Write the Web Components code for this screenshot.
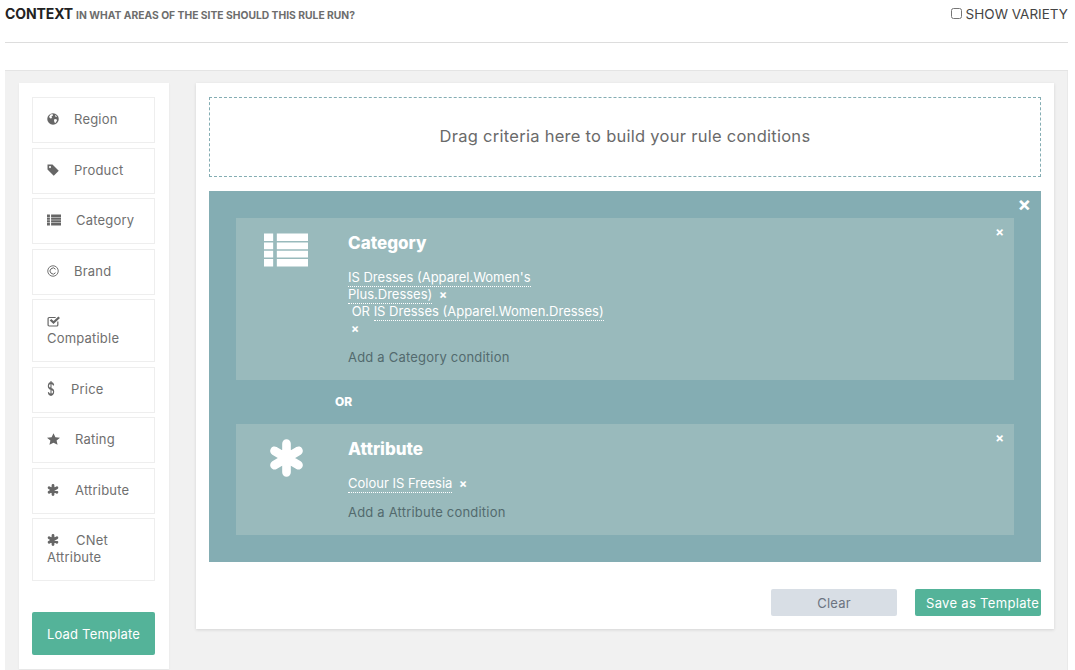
<!DOCTYPE html>
<html lang="en">
<head>
<meta charset="utf-8">
<title>Context</title>
<style>
    html, body { margin: 0; padding: 0; background: #fff; }
    body { font-family: Inter, "Open Sans", sans-serif; font-size: 13px; height: 670px; overflow: hidden; }
</style>
</head>
<body>
<rule-context></rule-context>

<script>
const ICONS = {
    globe: `<circle cx="12" cy="12" r="11.500"/><path fill="#fff" d="M7 3l4-1 1 3-3 2 1 3-3 1-3-3zM15 12l4 .5 1 2.500-3 5-2-1-1-4zM17 4l3 3-2 1-2-2z"/>`,
    tag: `<path fill-rule="evenodd" d="M1 1h10l12.500 12.500-10 10L1 11zM6 4a2 2 0 1 0 .01 0z"/>`,
    list: `<path d="M0 1h5v5H0zM7 1h17v5H7zM0 7h5v4.500H0zM7 7h17v4.500H7zM0 12.500h5V17H0zM7 12.500h17V17H7zM0 18h5v5H0zM7 18h17v5H7z"/>`,
    copyright: `<circle cx="12" cy="12" r="10.500" fill="none" stroke="currentColor" stroke-width="1.800"/><path fill="none" stroke="currentColor" stroke-width="2" d="M17 8.500a6 6 0 1 0 0 7"/>`,
    check: `<path fill="none" stroke="currentColor" stroke-width="2.200" d="M20 13v7a2 2 0 0 1-2 2H4a2 2 0 0 1-2-2V7a2 2 0 0 1 2-2h12"/><path d="M5 11l3-3 4 4 9-9 3 3-12 12z"/>`,
    dollar: `<path fill="none" stroke="currentColor" stroke-width="3.200" d="M20 7c-1-3-4-4-8-4-4 0-8 2-8 5 0 7 16 3 16 9 0 3-4 5-8 5-4 0-7-1-8-4M12 0v24"/>`,
    star: `<path d="M12 .500l3.500 7.800 8.500 1-6.300 5.700 1.800 8.500L12 19.300l-7.500 4.200 1.800-8.500L0 9.300l8.500-1z"/>`,
    asterisk: `<path fill="none" stroke="currentColor" stroke-width="5.600" stroke-linecap="round" d="M12 3v18M4.200 7.500l15.600 9M4.200 16.500l15.600-9"/>`
};

class RuleIcon extends HTMLElement {
    connectedCallback() {
        const name = this.getAttribute('name');
        const w = this.getAttribute('w') || 13;
        const h = this.getAttribute('h') || 13;
        this.attachShadow({ mode: 'open' });
        this.shadowRoot.innerHTML = `
            <style>
                :host { display: inline-block; line-height: 0; vertical-align: -1px; }
                svg { fill: currentColor; display: block; }
            </style>
            <svg width="${w}" height="${h}" viewBox="0 0 24 24" preserveAspectRatio="none">${ICONS[name]}</svg>
        `;
    }
}

class CriteriaItem extends HTMLElement {
    connectedCallback() {
        const icon = this.getAttribute('icon');
        const w = this.getAttribute('icon-w') || 12;
        const h = this.getAttribute('icon-h') || 12;
        const gap = this.getAttribute('gap') || 15;
        this.attachShadow({ mode: 'open' });
        this.shadowRoot.innerHTML = `
            <style>
                :host {
                    display: block;
                    box-sizing: border-box;
                    border: 1px solid #eee;
                    padding: 13px 14px 13.750px;
                    line-height: 17px;
                    color: #6f6f6f;
                    font-size: 13px;
                    letter-spacing: .2px;
                }
                rule-icon {
                    margin-right: ${gap}px;
                    margin-top: -3px;
                    vertical-align: ${h > 12 ? -2 : -1}px;
                    color: #666;
                }
            </style>
            <rule-icon name="${icon}" w="${w}" h="${h}"></rule-icon><slot></slot>
        `;
    }
}

class ActionButton extends HTMLElement {
    connectedCallback() {
        const grey = this.hasAttribute('grey');
        this.attachShadow({ mode: 'open' });
        this.shadowRoot.innerHTML = `
            <style>
                :host {
                    display: flex;
                    align-items: center;
                    justify-content: center;
                    box-sizing: border-box;
                    border-radius: 2px;
                    background: ${grey ? '#d8dee5' : '#54b399'};
                    color: ${grey ? '#6c7380' : '#fff'};
                    font-size: 13px;
                    white-space: nowrap;
                    letter-spacing: .2px;
                }
            </style>
            <slot></slot>
        `;
    }
}

class CriteriaSidebar extends HTMLElement {
    connectedCallback() {
        this.attachShadow({ mode: 'open' });
        this.shadowRoot.innerHTML = `
            <style>
                :host {
                    display: flex;
                    flex-direction: column;
                    box-sizing: border-box;
                    width: 150px;
                    height: 586px;
                    padding: 14.330px 14px 14px 13px;
                    background: #fff;
                    box-shadow: 0 1px 2px rgba(0, 0, 0, .06);
                }
                .items { display: flex; flex-direction: column; gap: 4.750px; }
                action-button { height: 43px; margin-top: auto; }
            </style>
            <div class="items">
                <criteria-item icon="globe">Region</criteria-item>
                <criteria-item icon="tag">Product</criteria-item>
                <criteria-item icon="list" icon-w="14" gap="15">Category</criteria-item>
                <criteria-item icon="copyright">Brand</criteria-item>
                <criteria-item icon="check" icon-w="13">Compatible</criteria-item>
                <criteria-item icon="dollar" icon-w="8" icon-h="15" gap="16">Price</criteria-item>
                <criteria-item icon="star" icon-w="13" gap="15">Rating</criteria-item>
                <criteria-item icon="asterisk" gap="16">Attribute</criteria-item>
                <criteria-item icon="asterisk" gap="17">CNet Attribute</criteria-item>
            </div>
            <action-button>Load Template</action-button>
        `;
    }
}

class ConditionCard extends HTMLElement {
    connectedCallback() {
        const title = this.getAttribute('title');
        const icon = this.getAttribute('icon');
        const w = this.getAttribute('icon-w');
        const h = this.getAttribute('icon-h');
        const top = this.getAttribute('icon-top');
        const left = this.getAttribute('icon-left');
        this.attachShadow({ mode: 'open' });
        this.shadowRoot.innerHTML = `
            <style>
                :host {
                    display: flex;
                    position: relative;
                    box-sizing: border-box;
                    background: #99babc;
                    color: #fff;
                    padding: 14px 0 14px 28px;
                }
                .pic { width: ${84 - left}px; flex: none; padding: ${top}px 0 0 ${left}px; }
                .close {
                    position: absolute;
                    top: 6px;
                    right: 10px;
                    font-weight: 700;
                    font-size: 13px;
                    line-height: 17px;
                }
                h3 { margin: 0 0 15px; font-size: 17px; line-height: 22px; font-weight: 800; }
                .body { width: 262px; line-height: 17px; font-size: 13px; }
                .add { margin-top: 12px; color: #536a6e; letter-spacing: .2px; white-space: nowrap; }
            </style>
            <div class="pic"><rule-icon name="${icon}" w="${w}" h="${h}"></rule-icon></div>
            <div>
                <h3>${title}</h3>
                <div class="body"><slot></slot></div>
                <div class="add">Add a ${title} condition</div>
            </div>
            <span class="close">×</span>
        `;
    }
}

class ConditionValue extends HTMLElement {
    connectedCallback() {
        this.attachShadow({ mode: 'open' });
        this.shadowRoot.innerHTML = `
            <style>
                :host { display: inline; }
                span { border-bottom: 1px dotted #fff; padding-bottom: 1px; }
                b { font-size: 12px; margin-left: 3px; }
            </style>
            <span><slot></slot></span> <b>×</b>
        `;
    }
}

class RuleBuilder extends HTMLElement {
    connectedCallback() {
        this.attachShadow({ mode: 'open' });
        this.shadowRoot.innerHTML = `
            <style>
                :host {
                    display: block;
                    box-sizing: border-box;
                    width: 858px;
                    height: 546px;
                    padding: 14px 13px 13px;
                    background: #fff;
                    box-shadow: 0 1px 3px rgba(0, 0, 0, .12);
                }
                .drop {
                    display: flex;
                    align-items: center;
                    justify-content: center;
                    box-sizing: border-box;
                    height: 80px;
                    padding-bottom: 2px;
                    border: 1px dashed #84adb3;
                    color: #6a6a6a;
                    font-size: 16.500px;
                    letter-spacing: .27px;
                }
                .group {
                    position: relative;
                    box-sizing: border-box;
                    height: 371px;
                    margin-top: 14px;
                    padding: 27px;
                    background: #84adb3;
                }
                .x {
                    position: absolute;
                    top: 3px;
                    right: 10px;
                    color: #fff;
                    font-size: 20px;
                    line-height: 20px;
                    font-weight: 700;
                }
                .or {
                    height: 44px;
                    line-height: 44px;
                    padding-left: 99px;
                    color: #fff;
                    font-size: 12px;
                    font-weight: 800;
                }
                .first { height: 162px; }
                .second { height: 111px; }
                .actions { display: flex; justify-content: flex-end; gap: 18px; margin-top: 27px; }
                action-button { width: 126px; height: 27px; }
                .save { justify-content: flex-start; padding-left: 11px; letter-spacing: .32px; }
            </style>
            <div class="drop">Drag criteria here to build your rule conditions</div>
            <div class="group">
                <span class="x">×</span>
                <condition-card class="first" title="Category" icon="list" icon-w="44" icon-h="36" icon-top="0" icon-left="0">
                    <condition-value>IS Dresses (Apparel.Women's Plus.Dresses)</condition-value><br>&nbsp;OR <condition-value>IS Dresses (Apparel.Women.Dresses)</condition-value>
                </condition-card>
                <div class="or">OR</div>
                <condition-card class="second" title="Attribute" icon="asterisk" icon-w="37" icon-h="38" icon-top="1" icon-left="4">
                    <condition-value>Colour IS Freesia</condition-value>
                </condition-card>
            </div>
            <div class="actions">
                <action-button grey>Clear</action-button>
                <action-button class="save">Save as Template</action-button>
            </div>
        `;
    }
}

class RuleContext extends HTMLElement {
    connectedCallback() {
        this.attachShadow({ mode: 'open' });
        this.shadowRoot.innerHTML = `
            <style>
                :host { display: block; padding: 0 7px 0 5px; }
                header {
                    display: flex;
                    justify-content: space-between;
                    align-items: center;
                    box-sizing: border-box;
                    height: 43px;
                    padding-bottom: 16px;
                    border-bottom: 1px solid #ddd;
                }
                .title { color: #222; font-weight: 700; font-size: 14px; letter-spacing: -.1px; }
                .sub { color: #6d6d6d; font-weight: 700; font-size: 10.300px; text-transform: uppercase; margin-left: 3px; }
                label { display: flex; align-items: center; gap: 4px; color: #444; font-size: 13.500px; margin-top: 1px; }
                input { margin: 0; width: 11px; height: 11px; }
                .panel {
                    display: flex;
                    gap: 27px;
                    box-sizing: border-box;
                    margin-top: 27px;
                    height: 600px;
                    padding: 12px 14px 0 14px;
                    background: #f1f1f1;
                    border-top: 1px solid #e4e4e4;
                    box-shadow: inset -1px 0 0 #e9e9e9;
                }
            </style>
            <header>
                <div><span class="title">CONTEXT</span><span class="sub">In what areas of the site should this rule run?</span></div>
                <label><input type="checkbox">SHOW VARIETY</label>
            </header>
            <div class="panel">
                <criteria-sidebar></criteria-sidebar>
                <rule-builder></rule-builder>
            </div>
        `;
    }
}

customElements.define('rule-icon', RuleIcon);
customElements.define('criteria-item', CriteriaItem);
customElements.define('action-button', ActionButton);
customElements.define('criteria-sidebar', CriteriaSidebar);
customElements.define('condition-card', ConditionCard);
customElements.define('condition-value', ConditionValue);
customElements.define('rule-builder', RuleBuilder);
customElements.define('rule-context', RuleContext);
</script>
</body>
</html>
